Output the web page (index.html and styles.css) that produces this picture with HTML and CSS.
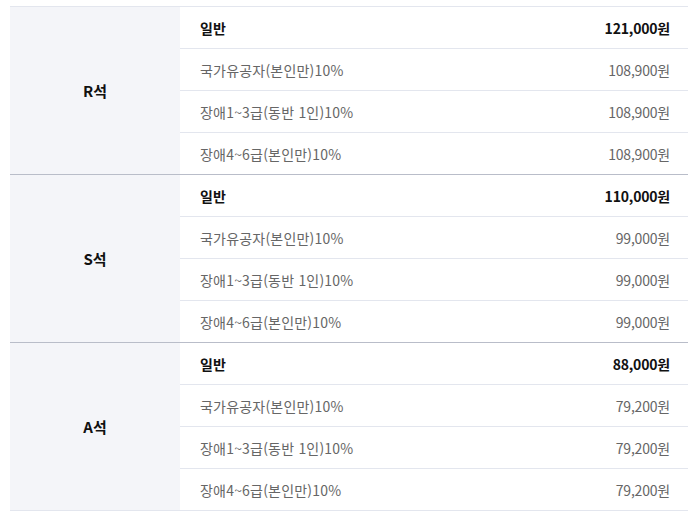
FILE: index.html
```html
<!DOCTYPE html>
<html lang="ko">
<head>
<meta charset="utf-8">
<link rel="stylesheet" href="styles.css">
</head>
<body>
<div class="price-table">
  <div class="group">
    <div class="seat">R석</div>
    <div class="rows">
      <div class="row main"><span>일반</span><span>121,000원</span></div>
      <div class="row"><span>국가유공자(본인만)10%</span><span>108,900원</span></div>
      <div class="row"><span>장애1~3급(동반 1인)10%</span><span>108,900원</span></div>
      <div class="row"><span>장애4~6급(본인만)10%</span><span>108,900원</span></div>
    </div>
  </div>
  <div class="group">
    <div class="seat">S석</div>
    <div class="rows">
      <div class="row main"><span>일반</span><span>110,000원</span></div>
      <div class="row"><span>국가유공자(본인만)10%</span><span>99,000원</span></div>
      <div class="row"><span>장애1~3급(동반 1인)10%</span><span>99,000원</span></div>
      <div class="row"><span>장애4~6급(본인만)10%</span><span>99,000원</span></div>
    </div>
  </div>
  <div class="group">
    <div class="seat">A석</div>
    <div class="rows">
      <div class="row main"><span>일반</span><span>88,000원</span></div>
      <div class="row"><span>국가유공자(본인만)10%</span><span>79,200원</span></div>
      <div class="row"><span>장애1~3급(동반 1인)10%</span><span>79,200원</span></div>
      <div class="row"><span>장애4~6급(본인만)10%</span><span>79,200원</span></div>
    </div>
  </div>
</div>
</body>
</html>
```

FILE: styles.css
```css
html, body {
  margin: 0;
  padding: 0;
  background: #ffffff;
}
body {
  padding: 6px 10px 0 10px;
  font-family: "Noto Sans CJK KR", "Noto Sans", sans-serif;
  font-size: 14px;
}
.price-table {
  width: 678px;
  border-bottom: 1px solid #e3e6ee;
}
.group {
  display: flex;
  border-top: 1px solid #b9bdc9;
}
.group:first-child {
  border-top-color: #e3e6ee;
}
.seat {
  width: 170px;
  flex: none;
  background: #f4f5f9;
  display: flex;
  align-items: center;
  justify-content: center;
  font-weight: 700;
  font-size: 15px;
  color: #111111;
}
.rows {
  flex: 1;
  display: flex;
  flex-direction: column;
}
.row {
  height: 41px;
  display: flex;
  align-items: center;
  justify-content: space-between;
  padding: 0 18px 0 20px;
  color: #666666;
}
.row span:first-child {
  letter-spacing: 0.2px;
}
.row span:last-child {
  letter-spacing: -0.2px;
}
.row + .row {
  border-top: 1px solid #e3e6ee;
}
.row.main {
  color: #111111;
  font-weight: 700;
}
```
